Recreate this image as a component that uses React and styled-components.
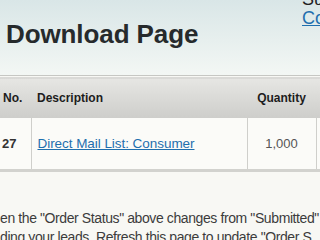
import React from "react";
import styled, { createGlobalStyle } from "styled-components";

const Global = createGlobalStyle`
  html, body {
    margin: 0;
    padding: 0;
    background: #f8f8f4;
  }
  body {
    font-family: "Liberation Sans", Arial, Helvetica, sans-serif;
  }
`;

const Page = styled.div`
  width: 320px;
  height: 240px;
  overflow: hidden;
  background: #f8f8f4;
`;

const Header = styled.header`
  height: 75px;
  border-bottom: 1px solid #c6c7c3;
  background: linear-gradient(#d9e6e7, #f3f7f4);
  display: flex;
  justify-content: space-between;
  align-items: flex-start;
`;

const Title = styled.h1`
  margin: 19px 0 0 6px;
  font-size: 26px;
  line-height: 30px;
  font-weight: bold;
  color: #262a2c;
  letter-spacing: -0.1px;
`;

const UserBox = styled.div`
  width: 18px;
  margin-top: -10px;
  font-size: 18px;
  line-height: 19px;
  color: #222;
  white-space: nowrap;
  overflow: hidden;
`;

const TopLink = styled.a`
  display: block;
  color: #1f6fae;
  text-decoration: underline;
`;

const TableWrap = styled.div`
  padding-top: 1px;
  width: 320px;
  overflow: hidden;
`;

const Table = styled.table`
  border-collapse: collapse;
  table-layout: fixed;
  width: 360px;
  border-bottom: 3px solid #d2d2ce;
`;

const HeadCell = styled.th`
  height: 40px;
  padding: 0 0 0 ${(p) => p.$pad || 0}px;
  text-align: ${(p) => p.$align || "left"};
  font-size: 12px;
  font-weight: bold;
  color: #1d1d1d;
  background: linear-gradient(#e6e6e3, #cdcdca);
  border-top: 1px solid #dadad7;
  white-space: nowrap;
`;

const Cell = styled.td`
  height: 51px;
  padding: 0 0 0 ${(p) => p.$pad || 0}px;
  text-align: ${(p) => p.$align || "left"};
  font-size: ${(p) => p.$size || 13}px;
  font-weight: ${(p) => (p.$bold ? "bold" : "normal")};
  color: ${(p) => p.$color || "#555"};
  background: #fbfbf8;
  border-left: ${(p) => (p.$first ? "none" : "1px solid #cfcfcb")};
  white-space: nowrap;
`;

const ItemLink = styled.a`
  color: #1f6fae;
  text-decoration: underline;
  font-size: 13.5px;
  letter-spacing: -0.05px;
`;

const Note = styled.div`
  margin-top: 37px;
  font-size: 14px;
  line-height: 19px;
  letter-spacing: -0.4px;
  color: #3c3c3c;
  white-space: nowrap;
`;

export default function App() {
  return (
    <Page>
      <Global />
      <Header>
        <Title>Download Page</Title>
        <UserBox>
          Su
          <TopLink href="#">Co</TopLink>
        </UserBox>
      </Header>
      <TableWrap>
        <Table>
          <colgroup>
            <col style={{ width: 31 }} />
            <col style={{ width: 216 }} />
            <col style={{ width: 69 }} />
            <col style={{ width: 44 }} />
          </colgroup>
          <thead>
            <tr>
              <HeadCell $pad={3}>No.</HeadCell>
              <HeadCell $pad={6}>Description</HeadCell>
              <HeadCell $align="center">Quantity</HeadCell>
              <HeadCell $pad={6}></HeadCell>
            </tr>
          </thead>
          <tbody>
            <tr>
              <Cell $first $pad={2} $bold $size={13} $color="#333">27</Cell>
              <Cell $pad={6}>
                <ItemLink href="#">Direct Mail List: Consumer</ItemLink>
              </Cell>
              <Cell $align="center">1,000</Cell>
              <Cell $pad={6}></Cell>
            </tr>
          </tbody>
        </Table>
      </TableWrap>
      <Note>
        en the "Order Status" above changes from "Submitted"
        <br />
        ding your leads. Refresh this page to update "Order S
      </Note>
    </Page>
  );
}
